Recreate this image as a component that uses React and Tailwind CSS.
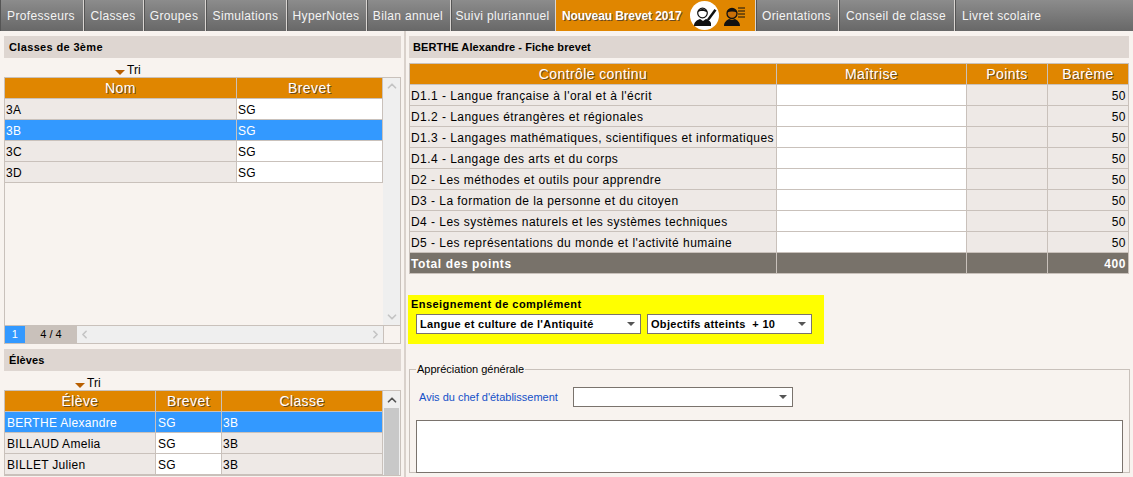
import { ChevronUp, ChevronDown, ChevronLeft, ChevronRight } from "lucide-react";

const TABS_LEFT = [
  { label: "Professeurs", w: "w-[84px]" },
  { label: "Classes", w: "w-[60px]" },
  { label: "Groupes", w: "w-[62px]" },
  { label: "Simulations", w: "w-[81px]" },
  { label: "HyperNotes", w: "w-[80px]" },
  { label: "Bilan annuel", w: "w-[84px]" },
  { label: "Suivi pluriannuel", w: "w-[105px]" },
];

const TABS_RIGHT = [
  { label: "Orientations", w: "w-[83px]" },
  { label: "Conseil de classe", w: "w-[116px]" },
];

const CLASSES = [
  { nom: "3A", brevet: "SG" },
  { nom: "3B", brevet: "SG", selected: true },
  { nom: "3C", brevet: "SG" },
  { nom: "3D", brevet: "SG" },
];

const ELEVES = [
  { nom: "BERTHE Alexandre", selected: true },
  { nom: "BILLAUD Amelia" },
  { nom: "BILLET Julien" },
];

const DOMAINES = [
  "D1.1 - Langue française à l'oral et à l'écrit",
  "D1.2 - Langues étrangères et régionales",
  "D1.3 - Langages mathématiques, scientifiques et informatiques",
  "D1.4 - Langage des arts et du corps",
  "D2 - Les méthodes et outils pour apprendre",
  "D3 - La formation de la personne et du citoyen",
  "D4 - Les systèmes naturels et les systèmes techniques",
  "D5 - Les représentations du monde et l'activité humaine",
];

function Tab({ label, w }) {
  return (
    <div className={`${w} h-full shrink-0 pr-[2px] flex items-center justify-center border-l border-l-[#555555] border-r border-r-[#d9d5d2] bg-gradient-to-b from-[#8c8c8c] to-[#686868] text-[12px] tracking-[0.35px] text-[#f4f4f4]`}>
      {label}
    </div>
  );
}

function SectionTitle({ tracking = "tracking-[0.35px]", children }) {
  return (
    <div className={`h-[22px] flex items-center pl-[5px] bg-[#ded6d1] text-[11px] font-bold ${tracking} text-black`}>
      {children}
    </div>
  );
}

function Tri({ offset }) {
  return (
    <div className={`h-[15px] flex items-center gap-[2px] ${offset} text-[12px] text-black`}>
      <span className="mt-[5px] w-0 h-0 border-x-[5px] border-x-transparent border-t-[5px] border-t-[#b85f00]"></span>
      <span>Tri</span>
    </div>
  );
}

function HeadCell({ w, children }) {
  return (
    <div className={`${w} h-full shrink-0 flex items-center justify-center border-r border-r-[#c9c1bb] text-[14px] tracking-[0.4px] text-white [text-shadow:1px_1px_0_#6b4a20]`}>
      {children}
    </div>
  );
}

function Cell({ w, bg, pad = "pl-[1px]", align = "", children }) {
  return (
    <div className={`${w} ${bg} ${pad} ${align} h-full shrink-0 flex items-center pt-[1px] pr-[2px] overflow-hidden whitespace-nowrap border-r border-r-[#c9c1bb]`}>
      {children}
    </div>
  );
}

function Select({ w, bold, children }) {
  return (
    <div className={`${w} h-[20px] flex items-center justify-between pl-[3px] pr-[5px] bg-white border border-[#7a736d] ${bold ? "font-bold" : ""} text-[11px] tracking-[0.3px] text-black`}>
      <span className="whitespace-pre">{children}</span>
      <span className="w-0 h-0 border-x-[4px] border-x-transparent border-t-[4px] border-t-[#555]"></span>
    </div>
  );
}

function BrevetIcons() {
  return (
    <div className="flex items-center gap-[4px]">
      <div className="w-[29px] h-[29px] rounded-full bg-white flex items-center justify-center">
        <svg width="25" height="22" viewBox="0 0 25 22">
          <path d="M2 21c0-4 3-6 6-7l3 2 3-2c2 .5 4 2 5 4v3z" fill="#111" />
          <circle cx="10.500" cy="8" r="4.800" fill="#fff" stroke="#111" strokeWidth="1.200" />
          <path d="M5.500 7.500c.5-4.500 9-5 10 0-2-1.500-7-2.500-10 0z" fill="#111" />
          <path d="M15.500 13.500L22.500 4l2 1.500-7 9.500-2.500 1z" fill="#111" />
        </svg>
      </div>
      <svg width="22" height="22" viewBox="0 0 22 22">
        <path d="M1 21c0-4 3-6 5-7l3 1 3-1c2 1 5 3 5 7z" fill="#111" />
        <circle cx="9" cy="8.500" r="5" fill="#c96f08" stroke="#111" strokeWidth="1.300" />
        <path d="M4 7.500c1-5 9-5 10 0-3-1.500-7-1.500-10 0z" fill="#111" />
        <path d="M15 3h7M15 6h7M15 9h7M15 12h7" stroke="#111" strokeWidth="1.200" />
      </svg>
    </div>
  );
}

export default function App() {
  return (
    <div className="w-[1133px] h-[477px] overflow-hidden bg-[#f8f3ef] font-['Liberation_Sans',Arial,sans-serif] text-[12px] text-black">
      {/* Onglets */}
      <div className="h-[31px] flex">
        {TABS_LEFT.map((t) => (
          <Tab key={t.label} {...t} />
        ))}
        <div className="w-[200px] h-full shrink-0 pl-[6px] flex items-center gap-[8px] whitespace-nowrap bg-[#e08600] border-r border-r-[#d9d5d2] text-[12px] font-bold tracking-[-0.1px] text-white [text-shadow:1px_1px_0_#6b4a20]">
          <span className="w-[120px] shrink-0">Nouveau Brevet 2017</span>
          <BrevetIcons />
        </div>
        {TABS_RIGHT.map((t) => (
          <Tab key={t.label} {...t} />
        ))}
        <div className="flex-1 h-full pl-[6px] flex items-center border-l border-l-[#555555] bg-gradient-to-b from-[#8c8c8c] to-[#686868] text-[12px] tracking-[0.35px] text-[#f4f4f4]">
          Livret scolaire
        </div>
      </div>

      <div className="flex pt-[5px]">
        {/* Colonne gauche */}
        <div className="w-[397px] ml-[4px] shrink-0">
          <SectionTitle>Classes de 3ème</SectionTitle>
          <div className="pt-[4px]">
            <Tri offset="pl-[111px]" />
          </div>
          <div className="h-[267px] flex flex-col border border-[#c9c1bb] text-[12px] tracking-[0.3px]">
            <div className="flex flex-1 min-h-0">
              <div className="w-[378px] shrink-0">
                <div className="h-[21px] flex bg-[#e08600] border-b border-b-[#c9c1bb]">
                  <HeadCell w="w-[232px]">Nom</HeadCell>
                  <HeadCell w="w-[146px]">Brevet</HeadCell>
                </div>
                {CLASSES.map((c) => (
                  <div key={c.nom} className={`h-[21px] flex border-b border-b-[#c9c1bb] ${c.selected ? "text-white" : ""}`}>
                    <Cell w="w-[232px]" bg={c.selected ? "bg-[#3399ff]" : "bg-[#eee9e6]"}>{c.nom}</Cell>
                    <Cell w="w-[146px]" bg={c.selected ? "bg-[#3399ff]" : "bg-white"}>{c.brevet}</Cell>
                  </div>
                ))}
              </div>
              <div className="flex-1 flex flex-col items-center justify-between py-[1px] bg-[#efefef] text-[#c4c4c4]">
                <ChevronUp size={14} strokeWidth={3} />
                <ChevronDown size={14} strokeWidth={3} />
              </div>
            </div>
            <div className="h-[18px] shrink-0 flex border-t border-t-[#c9c1bb]">
              <div className="w-[20px] flex items-center justify-center bg-[#3399ff] text-[11px] text-white">1</div>
              <div className="w-[52px] flex items-center justify-center bg-[#c9c1bb] text-[11px] tracking-[0px]">4 / 4</div>
              <div className="w-[306px] flex items-center justify-between px-[1px] bg-[#efefef] text-[#c4c4c4]">
                <ChevronLeft size={13} strokeWidth={3} />
                <ChevronRight size={13} strokeWidth={3} />
              </div>
              <div className="flex-1 border-l border-l-[#c9c1bb]"></div>
            </div>
          </div>

          <div className="mt-[5px]">
            <SectionTitle tracking="tracking-[0.1px]">Élèves</SectionTitle>
          </div>
          <div className="pt-[4px]">
            <Tri offset="pl-[71px]" />
          </div>
          <div className="flex border border-[#c9c1bb] text-[12px] tracking-[0.3px]">
            <div className="w-[378px] shrink-0">
              <div className="h-[21px] flex bg-[#e08600] border-b border-b-[#c9c1bb]">
                <HeadCell w="w-[151px]">Élève</HeadCell>
                <HeadCell w="w-[66px]">Brevet</HeadCell>
                <HeadCell w="w-[161px]">Classe</HeadCell>
              </div>
              {ELEVES.map((e) => (
                <div key={e.nom} className={`h-[21px] flex border-b border-b-[#c9c1bb] ${e.selected ? "text-white" : ""}`}>
                  <Cell w="w-[151px]" pad="pl-[2px]" bg={e.selected ? "bg-[#3399ff]" : "bg-[#eee9e6]"}>{e.nom}</Cell>
                  <Cell w="w-[66px]" pad="pl-[2px]" bg={e.selected ? "bg-[#3399ff]" : "bg-white"}>SG</Cell>
                  <Cell w="w-[161px]" bg={e.selected ? "bg-[#3399ff]" : "bg-[#eee9e6]"}>3B</Cell>
                </div>
              ))}
            </div>
            <div className="flex-1 flex flex-col items-center bg-[#efefef] text-[#555]">
              <div className="h-[17px] flex items-center">
                <ChevronUp size={14} strokeWidth={3} />
              </div>
              <div className="w-[15px] flex-1 bg-[#c8c8c8]"></div>
            </div>
          </div>
        </div>

        {/* Séparateur */}
        <div className="w-[2px] ml-[3px] -mt-[5px] h-[446px] shrink-0 bg-[#d9d1cb]"></div>

        {/* Colonne droite */}
        <div className="w-[721px] ml-[2px] shrink-0">
          <div className="pl-[1px]">
            <SectionTitle tracking="tracking-[0.07px]">
              <span className="-ml-[1px]">BERTHE Alexandre - Fiche brevet</span>
            </SectionTitle>
          </div>
          <div className="mt-[5px] w-[720px] ml-[1px] border-t border-l border-[#c9c1bb] text-[12px] tracking-[0.45px]">
            <div className="h-[21px] flex bg-[#e08600] border-b border-b-[#c9c1bb]">
              <HeadCell w="w-[367px]">Contrôle continu</HeadCell>
              <HeadCell w="w-[190px]">Maîtrise</HeadCell>
              <HeadCell w="w-[81px]">Points</HeadCell>
              <HeadCell w="w-[81px]">Barème</HeadCell>
            </div>
            {DOMAINES.map((d) => (
              <div key={d} className="h-[21px] flex border-b border-b-[#c9c1bb]">
                <Cell w="w-[367px]" bg="bg-[#eee9e6]">{d}</Cell>
                <Cell w="w-[190px]" bg="bg-white"></Cell>
                <Cell w="w-[81px]" bg="bg-[#eee9e6]"></Cell>
                <Cell w="w-[81px]" bg="bg-[#eee9e6]" align="justify-end">50</Cell>
              </div>
            ))}
            <div className="h-[21px] flex border-b border-b-[#c9c1bb] text-white font-bold tracking-[0.6px]">
              <Cell w="w-[367px]" bg="bg-[#78726a]">Total des points</Cell>
              <Cell w="w-[190px]" bg="bg-[#78726a]"></Cell>
              <Cell w="w-[81px]" bg="bg-[#78726a]"></Cell>
              <Cell w="w-[81px]" bg="bg-[#78726a]" align="justify-end">400</Cell>
            </div>
          </div>

          <div className="mt-[21px] w-[416px] h-[49px] pt-[3px] pl-[3px] bg-[#ffff00]">
            <div className="text-[11px] font-bold tracking-[0.45px] leading-[13px]">Enseignement de complément</div>
            <div className="flex gap-[6px] mt-[3px] ml-[5px]">
              <Select w="w-[225px]" bold>Langue et culture de l'Antiquité</Select>
              <Select w="w-[165px]" bold>{"Objectifs atteints  + 10"}</Select>
            </div>
          </div>

          {/* Appréciation */}
          <fieldset className="mt-[19px] ml-[1px] h-[110px] border border-[#c9c1bb] pl-[6px] pr-[6px]">
            <legend className="px-[1px] text-[11px] leading-[13px] tracking-[0px]">Appréciation générale</legend>
            <div className="flex items-center mt-[11px]">
              <div className="w-[157px] pl-[3px] text-[11px] tracking-[0px] text-[#1550c8]">Avis du chef d'établissement</div>
              <Select w="w-[220px]"></Select>
            </div>
            <div className="mt-[13px] h-[53px] w-[707px] bg-white border border-[#7a736d]"></div>
          </fieldset>
        </div>
      </div>
    </div>
  );
}
